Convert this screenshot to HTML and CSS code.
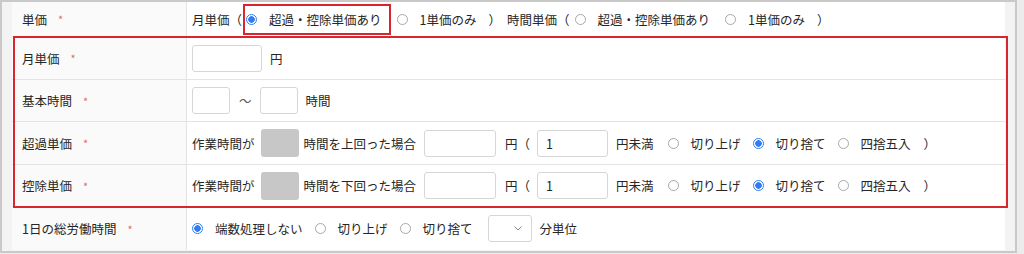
FILE: index.html
```html
<!DOCTYPE html>
<html lang="ja">
<head>
<meta charset="utf-8">
<link rel="stylesheet" href="styles.css">
</head>
<body>
<div class="frame">
  <div class="form">
    <div class="row r1">
      <div class="label">単価<span class="req">*</span></div>
      <div class="value">
        <span class="txt lead">月単価（</span>
        <span class="radio on"></span><span class="opt">超過・控除単価あり</span>
        <span class="radio"></span><span class="opt">1単価のみ</span>
        <span class="txt paren">）</span>
        <span class="txt lead2">時間単価（</span>
        <span class="radio"></span><span class="opt">超過・控除単価あり</span>
        <span class="radio"></span><span class="opt">1単価のみ</span>
        <span class="txt paren">）</span>
      </div>
    </div>
    <div class="row r2">
      <div class="label">月単価<span class="req">*</span></div>
      <div class="value">
        <span class="input w70"></span><span class="txt unit">円</span>
      </div>
    </div>
    <div class="row r3">
      <div class="label">基本時間<span class="req">*</span></div>
      <div class="value">
        <span class="input w38"></span><span class="txt tilde">〜</span><span class="input w38"></span><span class="txt unit">時間</span>
      </div>
    </div>
    <div class="row r4">
      <div class="label">超過単価<span class="req">*</span></div>
      <div class="value">
        <span class="txt">作業時間が</span><span class="box"></span><span class="txt cond">時間を上回った場合</span>
        <span class="input w72"></span><span class="txt yen">円（</span><span class="input w71">1</span><span class="txt under">円未満</span>
        <span class="radio"></span><span class="opt">切り上げ</span>
        <span class="radio on"></span><span class="opt">切り捨て</span>
        <span class="radio"></span><span class="opt">四捨五入</span>
        <span class="txt paren">）</span>
      </div>
    </div>
    <div class="row r5">
      <div class="label">控除単価<span class="req">*</span></div>
      <div class="value">
        <span class="txt">作業時間が</span><span class="box"></span><span class="txt cond">時間を下回った場合</span>
        <span class="input w72"></span><span class="txt yen">円（</span><span class="input w71">1</span><span class="txt under">円未満</span>
        <span class="radio"></span><span class="opt">切り上げ</span>
        <span class="radio on"></span><span class="opt">切り捨て</span>
        <span class="radio"></span><span class="opt">四捨五入</span>
        <span class="txt paren">）</span>
      </div>
    </div>
    <div class="row r6">
      <div class="label">1日の総労働時間<span class="req">*</span></div>
      <div class="value">
        <span class="radio on"></span><span class="opt">端数処理しない</span>
        <span class="radio"></span><span class="opt">切り上げ</span>
        <span class="radio"></span><span class="opt">切り捨て</span>
        <span class="select"><svg class="chev" width="8" height="5" viewBox="0 0 8 5"><path d="M0.5 0.5 L4 4 L7.5 0.5" fill="none" stroke="#888" stroke-width="1"/></svg></span><span class="txt unit">分単位</span>
      </div>
    </div>
  </div>
  <div class="hl hl-main"></div>
  <div class="hl hl-opt"></div>
</div>
</body>
</html>
```
FILE: styles.css
```css
html, body {
  margin: 0;
  padding: 0;
  background: #ececec;
}
body {
  width: 1024px;
  height: 254px;
  overflow: hidden;
  font-family: "Noto Sans CJK JP", "Noto Sans", sans-serif;
  font-size: 12.5px;
  color: #262626;
}
.frame {
  position: relative;
  box-sizing: border-box;
  width: 1017px;
  height: 253px;
  border: 2px solid #c9c9c9;
  background: #f3f3f3;
  padding: 0 9px 0 10px;
}
.form {
  background: #fff;
  width: 993px;
}
.row {
  display: grid;
  grid-template-columns: 175px 1fr;
  border-bottom: 1px solid #e3e3e3;
  box-sizing: border-box;
}
.r1 { height: 35px; }
.r2 { height: 43px; }
.r3 { height: 42px; }
.r4 { height: 43px; }
.r5 { height: 42px; }
.r6 { height: 43px; border-bottom: none; }
.label {
  background: #fafafa;
  border-right: 1px solid #e3e3e3;
  display: flex;
  align-items: center;
  padding-left: 10px;
}
.req {
  color: #e86a6a;
  margin-left: 11px;
  font-size: 11px;
}
.value {
  display: flex;
  align-items: center;
  padding-left: 5px;
  white-space: nowrap;
}
.radio {
  box-sizing: border-box;
  width: 11px;
  height: 11px;
  border-radius: 50%;
  border: 1px solid #a8a8a8;
  background: #fff;
  margin-right: 12px;
  flex: none;
}
.radio.on {
  border: 1px solid #2f7df5;
  background: radial-gradient(circle, #2f7df5 0 3px, #fff 3.5px);
}
.opt { margin-right: 14px; }
.r1 .opt { margin-right: 15px; }
.r1 .lead { margin-right: 4px; }
.r1 .paren { margin-left: -3px; margin-right: 6px; }
.r1 .lead2 { margin-right: 5px; }
.r4 .opt, .r5 .opt { margin-right: 12px; }
.r4 .paren, .r5 .paren { margin-left: 1px; }
.r6 .opt { margin-right: 12px; }
.input {
  box-sizing: border-box;
  height: 27px;
  border: 1px solid #d6d6d6;
  border-radius: 3px;
  background: #fff;
  display: inline-flex;
  align-items: center;
  padding-left: 8px;
  flex: none;
}
.w70 { width: 70px; }
.w38 { width: 38px; }
.w72 { width: 72px; }
.w71 { width: 71px; }
.unit { margin-left: 8px; }
.tilde { margin: 0 8px 0 9px; color: #555; }
.box {
  width: 38px;
  height: 28px;
  border-radius: 3px;
  background: #c7c7c7;
  margin-left: 6px;
  flex: none;
}
.cond { margin-left: 5px; margin-right: 8px; }
.yen { margin-left: 9px; margin-right: 7px; }
.under { margin-left: 8px; margin-right: 14px; }
.select {
  box-sizing: border-box;
  width: 44px;
  height: 27px;
  border: 1px solid #d6d6d6;
  border-radius: 3px;
  background: #fff;
  display: inline-flex;
  align-items: center;
  justify-content: flex-end;
  padding-right: 9px;
  margin-left: 3px;
  flex: none;
}
.hl {
  position: absolute;
  box-sizing: border-box;
  border: 2px solid #d8262e;
}
.hl-main {
  left: 11px;
  top: 34px;
  width: 995px;
  height: 172px;
}
.hl-opt {
  left: 241px;
  top: 2px;
  width: 148px;
  height: 31px;
}
```
